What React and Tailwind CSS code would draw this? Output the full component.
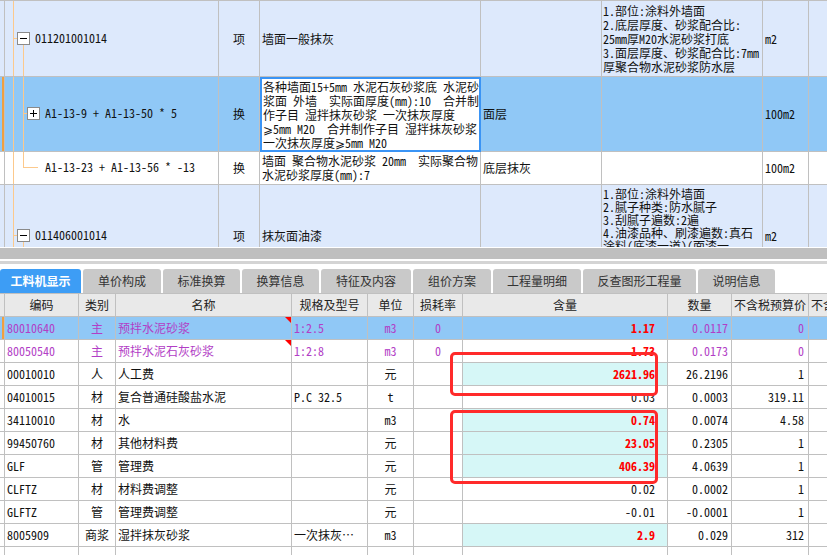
import React from 'react';

const rows = [
  { code: '80010640', type: '主', name: '预拌水泥砂浆', spec: '1:2.5', unit: 'm3', loss: '0', amt: '1.17', qty: '0.0117', price: '0', purple: true, selected: true, red: true, tri: true },
  { code: '80050540', type: '主', name: '预拌水泥石灰砂浆', spec: '1:2:8', unit: 'm3', loss: '0', amt: '1.73', qty: '0.0173', price: '0', purple: true, red: true, tri: true },
  { code: '00010010', type: '人', name: '人工费', spec: '', unit: '元', loss: '', amt: '2621.96', qty: '26.2196', price: '1', cyan: true, red: true },
  { code: '04010015', type: '材', name: '复合普通硅酸盐水泥', spec: 'P.C 32.5', unit: 't', loss: '', amt: '0.03', qty: '0.0003', price: '319.11' },
  { code: '34110010', type: '材', name: '水', spec: '', unit: 'm3', loss: '', amt: '0.74', qty: '0.0074', price: '4.58', cyan: true, red: true },
  { code: '99450760', type: '材', name: '其他材料费', spec: '', unit: '元', loss: '', amt: '23.05', qty: '0.2305', price: '1', cyan: true, red: true },
  { code: 'GLF', type: '管', name: '管理费', spec: '', unit: '元', loss: '', amt: '406.39', qty: '4.0639', price: '1', cyan: true, red: true },
  { code: 'CLFTZ', type: '材', name: '材料费调整', spec: '', unit: '元', loss: '', amt: '0.02', qty: '0.0002', price: '1' },
  { code: 'GLFTZ', type: '管', name: '管理费调整', spec: '', unit: '元', loss: '', amt: '-0.01', qty: '-0.0001', price: '1' },
  { code: '8005909', type: '商浆', name: '湿拌抹灰砂浆', spec: '一次抹灰…', unit: 'm3', loss: '', amt: '2.9', qty: '0.029', price: '312', cyan: true, red: true },
  { code: '', type: '', name: '', spec: '', unit: '', loss: '', amt: '', qty: '', price: '' },
];

const tabs = [
  { label: '工料机显示', w: 'w-[81px]', active: true },
  { label: '单价构成', w: 'w-[78px]' },
  { label: '标准换算', w: 'w-[77px]' },
  { label: '换算信息', w: 'w-[77px]' },
  { label: '特征及内容', w: 'w-[90px]' },
  { label: '组价方案', w: 'w-[78px]' },
  { label: '工程量明细', w: 'w-[88px]' },
  { label: '反查图形工程量', w: 'w-[113px]' },
  { label: '说明信息', w: 'w-[77px]' },
];

const ORANGE = 'bg-[#fcc98c]';

function Box({ plus }) {
  return (
    <div className="absolute w-[13px] h-[13px] border border-[#8a8a8a] bg-white">
      <div className="absolute left-[2px] top-[5px] w-[7px] h-px bg-black" />
      {plus && <div className="absolute left-[5px] top-[2px] w-px h-[7px] bg-black" />}
    </div>
  );
}

function DataRow({ r }) {
  const txt = r.purple ? 'text-[#b23ec6]' : 'text-[#111]';
  const bg = r.selected ? 'bg-[#90c8f6]' : 'bg-white';
  return (
    <div className={`flex h-[23px] ${bg} ${txt}`}>
      <div className="w-[5px] shrink-0 border-r border-b border-[#c0c0c0] relative">
        {r.selected && <div className="absolute left-[2px] top-0 bottom-0 w-[2px] bg-[#f0a040]" />}
      </div>
      <div className="w-[74px] shrink-0 border-r border-b border-[#c0c0c0] flex items-center pl-[2px]">{r.code}</div>
      <div className="w-[37px] shrink-0 border-r border-b border-[#c0c0c0] flex items-center justify-center">{r.type}</div>
      <div className="w-[176px] shrink-0 border-r border-b border-[#c0c0c0] flex items-center pl-[2px] relative">
        {r.name}
        {r.tri && <div className="absolute right-0 top-0 w-0 h-0 border-l-[6px] border-l-transparent border-t-[6px] border-t-[#ff0000]" />}
      </div>
      <div className="w-[76px] shrink-0 border-r border-b border-[#c0c0c0] flex items-center pl-[2px] whitespace-nowrap overflow-hidden">{r.spec}</div>
      <div className="w-[46px] shrink-0 border-r border-b border-[#c0c0c0] flex items-center justify-center">{r.unit}</div>
      <div className="w-[49px] shrink-0 border-r border-b border-[#c0c0c0] flex items-center justify-center">{r.loss}</div>
      <div className={`w-[205px] shrink-0 border-r border-b border-[#c0c0c0] flex items-center justify-end pr-[12px] ${r.cyan ? 'bg-[#d6f7f7]' : ''} ${r.red ? 'text-[#ff0000] font-bold' : ''}`}>{r.amt}</div>
      <div className="w-[64px] shrink-0 border-r border-b border-[#c0c0c0] flex items-center justify-end pr-[3px]">{r.qty}</div>
      <div className="w-[77px] shrink-0 border-r border-b border-[#c0c0c0] flex items-center justify-end pr-[4px]">{r.price}</div>
      <div className="flex-1 border-b border-[#c0c0c0]" />
    </div>
  );
}

export default function App() {
  return (
    <div className="w-[827px] h-[555px] overflow-hidden bg-white text-[12px] leading-[14px] text-[#111] font-['Noto_Sans_Mono_CJK_SC','Noto_Sans_CJK_SC',sans-serif]">
      {/* upper grid */}
      <div className="h-[248px] overflow-hidden border-t border-[#c0c0c0]">
        {/* row 1 */}
        <div className="flex h-[76px] bg-[#dde9fc]">
          <div className="w-[5px] shrink-0 border-r border-b border-[#c0c0c0]" />
          <div className="w-[214px] shrink-0 border-r border-b border-[#c0c0c0] relative">
            <div className={`absolute left-[8px] top-0 bottom-0 w-px ${ORANGE}`} />
            <div className={`absolute left-[8px] top-[37px] w-[4px] h-px ${ORANGE}`} />
            <div className={`absolute left-[18px] top-[44px] bottom-0 w-px ${ORANGE}`} />
            <div className="absolute left-[12px] top-[31px]"><Box /></div>
            <div className="absolute left-[30px] top-[30px]">011201001014</div>
          </div>
          <div className="w-[41px] shrink-0 border-r border-b border-[#c0c0c0] flex items-center justify-center">项</div>
          <div className="w-[221px] shrink-0 border-r border-b border-[#c0c0c0] flex items-center pl-[2px]">墙面一般抹灰</div>
          <div className="w-[121px] shrink-0 border-r border-b border-[#c0c0c0]" />
          <div className="w-[161px] shrink-0 border-r border-b border-[#c0c0c0] flex items-center pl-[1px] whitespace-nowrap">
            <div>
              1.部位:涂料外墙面<br />
              2.底层厚度、砂浆配合比:<br />
              25mm厚M20水泥砂浆打底<br />
              3.面层厚度、砂浆配合比:7mm<br />
              厚聚合物水泥砂浆防水层
            </div>
          </div>
          <div className="w-[46px] shrink-0 border-r border-b border-[#c0c0c0] flex items-center pl-[2px]">m2</div>
          <div className="flex-1 border-b border-[#c0c0c0]" />
        </div>

        {/* row 2 selected */}
        <div className="flex h-[75px] bg-[#90c8f6]">
          <div className="w-[5px] shrink-0 border-r border-b border-[#c0c0c0] relative">
            <div className="absolute left-[2px] top-0 bottom-0 w-[2px] bg-[#f0a040]" />
          </div>
          <div className="w-[214px] shrink-0 border-r border-b border-[#c0c0c0] relative">
            <div className={`absolute left-[8px] top-0 bottom-0 w-px ${ORANGE}`} />
            <div className={`absolute left-[18px] top-0 bottom-0 w-px ${ORANGE}`} />
            <div className={`absolute left-[18px] top-[36px] w-[4px] h-px ${ORANGE}`} />
            <div className="absolute left-[22px] top-[30px]"><Box plus /></div>
            <div className="absolute left-[40px] top-[29px] whitespace-pre">A1-13-9 + A1-13-50 * 5</div>
          </div>
          <div className="w-[41px] shrink-0 border-r border-b border-[#c0c0c0] flex items-center justify-center">换</div>
          <div className="w-[221px] shrink-0 bg-white border-2 border-[#3a94f5] flex items-center pl-[1px] whitespace-pre">
            <div>
              {'各种墙面15+5mm 水泥石灰砂浆底 水泥砂\n浆面 外墙  实际面厚度(mm):10  合并制\n作子目 湿拌抹灰砂浆 一次抹灰厚度\n⩾5mm M20  合并制作子目 湿拌抹灰砂浆\n一次抹灰厚度⩾5mm M20'}
            </div>
          </div>
          <div className="w-[121px] shrink-0 border-r border-b border-[#c0c0c0] flex items-center pl-[2px]">面层</div>
          <div className="w-[161px] shrink-0 border-r border-b border-[#c0c0c0]" />
          <div className="w-[46px] shrink-0 border-r border-b border-[#c0c0c0] flex items-center pl-[2px]">100m2</div>
          <div className="flex-1 border-b border-[#c0c0c0]" />
        </div>

        {/* row 3 */}
        <div className="flex h-[33px] bg-white">
          <div className="w-[5px] shrink-0 border-r border-b border-[#c0c0c0]" />
          <div className="w-[214px] shrink-0 border-r border-b border-[#c0c0c0] relative">
            <div className={`absolute left-[8px] top-0 bottom-0 w-px ${ORANGE}`} />
            <div className={`absolute left-[18px] top-0 h-[15px] w-px ${ORANGE}`} />
            <div className={`absolute left-[18px] top-[15px] w-[15px] h-px ${ORANGE}`} />
            <div className="absolute left-[40px] top-[8px] whitespace-pre">A1-13-23 + A1-13-56 * -13</div>
          </div>
          <div className="w-[41px] shrink-0 border-r border-b border-[#c0c0c0] flex items-center justify-center">换</div>
          <div className="w-[221px] shrink-0 border-r border-b border-[#c0c0c0] flex items-center pl-[2px] whitespace-pre">
            <div>{'墙面 聚合物水泥砂浆 20mm  实际聚合物\n水泥砂浆厚度(mm):7'}</div>
          </div>
          <div className="w-[121px] shrink-0 border-r border-b border-[#c0c0c0] flex items-center pl-[2px]">底层抹灰</div>
          <div className="w-[161px] shrink-0 border-r border-b border-[#c0c0c0]" />
          <div className="w-[46px] shrink-0 border-r border-b border-[#c0c0c0] flex items-center pl-[2px]">100m2</div>
          <div className="flex-1 border-b border-[#c0c0c0]" />
        </div>

        {/* row 4 (cut off by the pane) */}
        <div className="flex h-[62px] bg-[#dde9fc] overflow-hidden">
          <div className="w-[5px] shrink-0 border-r border-[#c0c0c0]" />
          <div className="w-[214px] shrink-0 border-r border-[#c0c0c0] relative">
            <div className={`absolute left-[8px] top-0 bottom-0 w-px ${ORANGE}`} />
            <div className={`absolute left-[8px] top-[50px] w-[4px] h-px ${ORANGE}`} />
            <div className={`absolute left-[18px] top-[57px] bottom-0 w-px ${ORANGE}`} />
            <div className="absolute left-[12px] top-[44px]"><Box /></div>
            <div className="absolute left-[30px] top-[43px]">011406001014</div>
          </div>
          <div className="w-[41px] shrink-0 border-r border-[#c0c0c0] flex items-end justify-center pb-[4px]">项</div>
          <div className="w-[221px] shrink-0 border-r border-[#c0c0c0] flex items-end pl-[2px] pb-[4px]">抹灰面油漆</div>
          <div className="w-[121px] shrink-0 border-r border-[#c0c0c0]" />
          <div className="w-[161px] shrink-0 border-r border-[#c0c0c0] pl-[1px] whitespace-nowrap overflow-hidden leading-[13px] pt-[2px]">
            <div>
              1.部位:涂料外墙面<br />
              2.腻子种类:防水腻子<br />
              3.刮腻子遍数:2遍<br />
              4.油漆品种、刷漆遍数:真石<br />
              涂料(底漆一道)(面漆一
            </div>
          </div>
          <div className="w-[46px] shrink-0 border-r border-[#c0c0c0] flex items-end pl-[2px] pb-[4px]">m2</div>
          <div className="flex-1" />
        </div>
      </div>

      {/* splitter / scrollbar */}
      <div className="h-[11px] bg-[#bfbfbf]" />
      <div className="h-[2px] bg-white" />
      <div className="h-[3px] bg-[#d4d4d4]" />

      {/* tabs */}
      <div className="h-[29px] pt-[5px] flex items-end gap-[2px] bg-white">
        {tabs.map((t) => (
          <div
            key={t.label}
            className={`${t.w} h-[24px] shrink-0 rounded-t-[3px] flex items-center justify-center ${t.active ? 'bg-[#3d9df5] text-white font-bold' : 'bg-[#c9c9c9] text-[#333]'}`}
          >
            {t.label}
          </div>
        ))}
      </div>

      {/* lower table */}
      <div className="relative">
        <div className="flex h-[24px] bg-[#e9e9e9] text-[#222] border-t border-[#c0c0c0]">
          <div className="w-[5px] shrink-0 border-r border-b border-[#c0c0c0]" />
          <div className="w-[74px] shrink-0 border-r border-b border-[#c0c0c0] flex items-center justify-center">编码</div>
          <div className="w-[37px] shrink-0 border-r border-b border-[#c0c0c0] flex items-center justify-center">类别</div>
          <div className="w-[176px] shrink-0 border-r border-b border-[#c0c0c0] flex items-center justify-center">名称</div>
          <div className="w-[76px] shrink-0 border-r border-b border-[#c0c0c0] flex items-center justify-center">规格及型号</div>
          <div className="w-[46px] shrink-0 border-r border-b border-[#c0c0c0] flex items-center justify-center">单位</div>
          <div className="w-[49px] shrink-0 border-r border-b border-[#c0c0c0] flex items-center justify-center">损耗率</div>
          <div className="w-[205px] shrink-0 border-r border-b border-[#c0c0c0] flex items-center justify-center">含量</div>
          <div className="w-[64px] shrink-0 border-r border-b border-[#c0c0c0] flex items-center justify-center">数量</div>
          <div className="w-[77px] shrink-0 border-r border-b border-[#c0c0c0] flex items-center justify-center">不含税预算价</div>
          <div className="flex-1 border-b border-[#c0c0c0] flex items-center pl-[2px] whitespace-nowrap overflow-hidden">不含</div>
        </div>
        {rows.map((r, i) => (
          <DataRow key={i} r={r} />
        ))}

        {/* red annotation boxes */}
        <div className="absolute left-[450px] top-[59px] w-[208px] h-[44px] border-[3px] border-[#ff2a2a] rounded-[5px]" />
        <div className="absolute left-[450px] top-[117px] w-[208px] h-[74px] border-[3px] border-[#ff2a2a] rounded-[5px]" />
      </div>
    </div>
  );
}
